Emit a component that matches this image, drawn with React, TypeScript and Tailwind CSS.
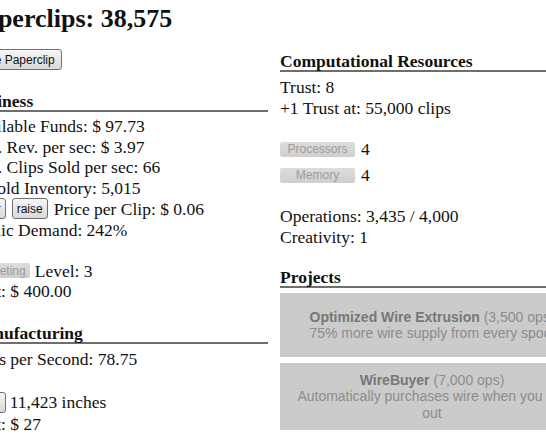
import React from 'react';

const serif = { fontFamily: "'Liberation Serif', 'Times New Roman', serif" };
const sans = { fontFamily: "'Liberation Sans', Arial, sans-serif" };

const btn =
  'inline-flex items-center justify-center h-[21px] border border-[#707070] rounded-[3px] bg-gradient-to-b from-[#f7f7f7] to-[#d9d9d9] text-[#111] leading-none';
const offBtn =
  'inline-flex items-center justify-center h-[15px] rounded-[2px] bg-gradient-to-b from-[#dcdcdc] to-[#cfcfcf] text-[#9c9c9c] text-[12px] leading-none';

const Heading: React.FC<{ children: React.ReactNode; className?: string }> = ({ children, className = '' }) => (
  <div className={`font-bold leading-[18px] border-b-2 border-[#6e6e6e] ${className}`}>{children}</div>
);

const Line: React.FC<{ children?: React.ReactNode; className?: string }> = ({ children, className = '' }) => (
  <div className={`h-[20.5px] leading-[20.5px] whitespace-nowrap ${className}`}>{children}</div>
);

const Project: React.FC<{ title: string; cost: string; lines: string[]; h: string; className?: string }> = ({ title, cost, lines, h, className = '' }) => (
  <div
    className={`${h} w-[304px] bg-[#cbcbcb] flex flex-col items-center justify-center text-[14px] leading-[16.5px] text-[#8c8c8c] text-center whitespace-nowrap ${className}`}
    style={sans}
  >
    <div>
      <span className="font-bold text-[#777]">{title}</span> ({cost})
    </div>
    {lines.map((l) => (
      <div key={l}>{l}</div>
    ))}
  </div>
);

const App: React.FC = () => {
  return (
    <div className="w-[546px] h-[437px] overflow-hidden bg-white text-[#111] text-[17.5px]" style={serif}>
      <div className="flex gap-[12px] -ml-[31px]">
        {/* left column */}
        <div className="w-[299px] shrink-0">
          <div className="mt-[4px] text-[26px] font-bold leading-[30px] whitespace-nowrap">Paperclips: 38,575</div>
          <div className="mt-[15px] flex">
            <button className={`${btn} text-[12px] px-[6px] -ml-[4px]`} style={sans}>Make Paperclip</button>
          </div>

          <Heading className="mt-[22px]">Business</Heading>
          <Line className="mt-[4px]">Available Funds: $ 97.73</Line>
          <Line>Avg. Rev. per sec: $ 3.97</Line>
          <Line>Avg. Clips Sold per sec: 66</Line>
          <Line>Unsold Inventory: 5,015</Line>
          <div className="h-[21.5px] flex items-center gap-[6px] whitespace-nowrap -ml-[2px]">
            <button className={`${btn} text-[12px] px-[4px]`} style={sans}>lower</button>
            <button className={`${btn} text-[12px] px-[4px]`} style={sans}>raise</button>
            <span>Price per Clip: $ 0.06</span>
          </div>
          <Line>Public Demand: 242%</Line>
          <Line />
          <div className="h-[20.5px] flex items-center gap-[5px] whitespace-nowrap">
            <button className={`${offBtn} px-[4px]`} style={sans}>Marketing</button>
            <span>Level: 3</span>
          </div>
          <Line>Cost: $ 400.00</Line>

          <Heading className="mt-[22.5px]">Manufacturing</Heading>
          <Line className="mt-[5px]">Clips per Second: 78.75</Line>
          <Line />
          <div className="h-[24px] flex items-center gap-[4px] whitespace-nowrap -ml-[4px]">
            <button className={`${btn} text-[13px] px-[6px]`} style={sans}>Wire</button>
            <span>11,423 inches</span>
          </div>
          <Line>Cost: $ 27</Line>
        </div>

        {/* right column */}
        <div className="w-[304px] shrink-0">
          <Heading className="mt-[52px]">Computational Resources</Heading>
          <Line className="mt-[5px]">Trust: 8</Line>
          <Line>+1 Trust at: 55,000 clips</Line>
          <div className="mt-[18px] h-[26px] flex items-center gap-[6px]">
            <button className={`${offBtn} w-[75px]`} style={sans}>Processors</button>
            <span>4</span>
          </div>
          <div className="h-[26px] flex items-center gap-[6px]">
            <button className={`${offBtn} w-[75px]`} style={sans}>Memory</button>
            <span>4</span>
          </div>
          <Line className="mt-[18px]">Operations: 3,435 / 4,000</Line>
          <Line>Creativity: 1</Line>

          <Heading className="mt-[21px]">Projects</Heading>
          <Project
            className="mt-[5px]"
            h="h-[64px]"
            title="Optimized Wire Extrusion"
            cost="3,500 ops"
            lines={['75% more wire supply from every spool']}
          />
          <Project
            className="mt-[6px]"
            h="h-[67px]"
            title="WireBuyer"
            cost="7,000 ops"
            lines={['Automatically purchases wire when you run', 'out']}
          />
        </div>
      </div>
    </div>
  );
};

export default App;
